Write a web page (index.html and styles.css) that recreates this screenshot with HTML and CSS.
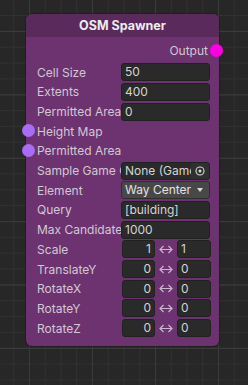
FILE: index.html
```html
<!DOCTYPE html>
<html lang="en">
<head>
  <meta charset="UTF-8" />
  <title>OSM Spawner</title>
  <link rel="stylesheet" href="styles.css">
</head>
<body>
  <div class="node">
    <div class="node-title">OSM Spawner</div>
    <div class="node-body">
      <div class="out-row">
        <span>Output</span>
        <span class="port port-out"></span>
      </div>

      <div class="row"><div class="label">Cell Size</div><div class="field">50</div></div>
      <div class="row"><div class="label">Extents</div><div class="field">400</div></div>
      <div class="row"><div class="label">Permitted Area</div><div class="field">0</div></div>

      <div class="row in-row"><span class="port port-in"></span><div class="label">Height Map</div></div>
      <div class="row in-row"><span class="port port-in"></span><div class="label">Permitted Area</div></div>

      <div class="row">
        <div class="label">Sample Game Object</div>
        <div class="field object-field">
          <span class="object-name">None (Game Object)</span>
          <span class="picker">
            <svg width="10" height="10" viewBox="0 0 10 10"><circle cx="5" cy="5" r="4" fill="none" stroke="#d8d8d8" stroke-width="1.1"/><circle cx="5" cy="5" r="1.5" fill="#d8d8d8"/></svg>
          </span>
        </div>
      </div>
      <div class="row">
        <div class="label">Element</div>
        <div class="field dropdown"><span>Way Center</span><span class="caret"></span></div>
      </div>
      <div class="row"><div class="label">Query</div><div class="field">[building]</div></div>
      <div class="row"><div class="label">Max Candidates</div><div class="field">1000</div></div>

      <div class="row">
        <div class="label">Scale</div>
        <div class="field vec vec-min">1</div>
        <span class="swap"><svg width="14" height="9" viewBox="0 0 14 9"><path d="M1 4.5h12M4.5 1L1 4.5 4.5 8M9.5 1L13 4.5 9.5 8" fill="none" stroke="#c9b6cc" stroke-width="1.2"/></svg></span>
        <div class="field vec">1</div>
      </div>
      <div class="row">
        <div class="label">TranslateY</div>
        <div class="field vec vec-min">0</div>
        <span class="swap"><svg width="14" height="9" viewBox="0 0 14 9"><path d="M1 4.5h12M4.5 1L1 4.5 4.5 8M9.5 1L13 4.5 9.5 8" fill="none" stroke="#c9b6cc" stroke-width="1.2"/></svg></span>
        <div class="field vec">0</div>
      </div>
      <div class="row">
        <div class="label">RotateX</div>
        <div class="field vec vec-min">0</div>
        <span class="swap"><svg width="14" height="9" viewBox="0 0 14 9"><path d="M1 4.5h12M4.5 1L1 4.5 4.5 8M9.5 1L13 4.5 9.5 8" fill="none" stroke="#c9b6cc" stroke-width="1.2"/></svg></span>
        <div class="field vec">0</div>
      </div>
      <div class="row">
        <div class="label">RotateY</div>
        <div class="field vec vec-min">0</div>
        <span class="swap"><svg width="14" height="9" viewBox="0 0 14 9"><path d="M1 4.5h12M4.5 1L1 4.5 4.5 8M9.5 1L13 4.5 9.5 8" fill="none" stroke="#c9b6cc" stroke-width="1.2"/></svg></span>
        <div class="field vec">0</div>
      </div>
      <div class="row">
        <div class="label">RotateZ</div>
        <div class="field vec vec-min">0</div>
        <span class="swap"><svg width="14" height="9" viewBox="0 0 14 9"><path d="M1 4.5h12M4.5 1L1 4.5 4.5 8M9.5 1L13 4.5 9.5 8" fill="none" stroke="#c9b6cc" stroke-width="1.2"/></svg></span>
        <div class="field vec">0</div>
      </div>
    </div>
  </div>
</body>
</html>
```

FILE: styles.css
```css
* { box-sizing: border-box; margin: 0; padding: 0; }
html, body { height: 100%; }
body {
  background-color: #272727;
  background-image:
    linear-gradient(to right, #3b3b3b 1px, transparent 1px),
    linear-gradient(to bottom, #3b3b3b 1px, transparent 1px),
    linear-gradient(to right, #313131 1px, transparent 1px),
    linear-gradient(to bottom, #313131 1px, transparent 1px);
  background-size: 63px 63.4px, 63px 63.4px, 15.75px 15.85px, 15.75px 15.85px;
  background-position: 29px 31px, 29px 31px, 13.25px 15px, 13.25px 15px;
  color: #d2c8d2;
  font-family: Inter, "Noto Sans", sans-serif;
  font-size: 12px;
  overflow: hidden;
  padding: 14px 0 0 26px;
}
.node {
  background-color: #6d3370;
  border-radius: 6px;
  box-shadow: 0 0 0 1px rgba(20, 10, 20, 0.35);
  position: relative;
  width: 193px;
}
.node-title {
  background-color: #5a2a5c;
  border-radius: 6px 6px 0 0;
  color: #ececec;
  font-weight: bold;
  font-size: 12.5px;
  height: 23px;
  line-height: 24px;
  text-align: center;
}
.node-body {
  padding: 3px 0 8px;
}
.out-row {
  align-items: center;
  display: flex;
  height: 20px;
  justify-content: flex-end;
  margin-bottom: 2.3px;
  padding-right: 11px;
  position: relative;
}
.port {
  border-radius: 50%;
  height: 13px;
  position: absolute;
  width: 13px;
}
.port-out {
  background-color: #ff00e4;
  right: -4px;
  top: 3.5px;
}
.port-in {
  background-color: #a86df4;
  left: -4.5px;
  top: 2.8px;
}
.row {
  align-items: center;
  display: flex;
  height: 19.7px;
  padding-left: 11px;
  position: relative;
}
.label {
  flex: none;
  overflow: hidden;
  white-space: nowrap;
  width: 84px;
}
.in-row .label { width: auto; }
.field {
  background-color: #2a2a2a;
  border: 1px solid #212121;
  border-radius: 3px;
  color: #d4d4d4;
  height: 18px;
  line-height: 16px;
  overflow: hidden;
  padding: 0 3px;
  white-space: nowrap;
  width: 89px;
}
.object-field {
  display: flex;
  padding-right: 0;
}
.object-name {
  flex: 1;
  overflow: hidden;
}
.picker {
  align-items: center;
  background-color: #303030;
  display: flex;
  justify-content: center;
  width: 18px;
}
.dropdown {
  align-items: center;
  background-color: #484848;
  border-color: #2e2e2e;
  color: #e2e2e2;
  display: flex;
  justify-content: space-between;
  padding-right: 6px;
}
.caret {
  border-left: 3.5px solid transparent;
  border-right: 3.5px solid transparent;
  border-top: 4px solid #d8d8d8;
  height: 0;
  width: 0;
}
.vec {
  width: 34px;
}
.vec-min {
  margin-left: 1px;
  text-align: right;
  width: 33px;
}
.swap {
  display: flex;
  justify-content: center;
  width: 22px;
}
```
